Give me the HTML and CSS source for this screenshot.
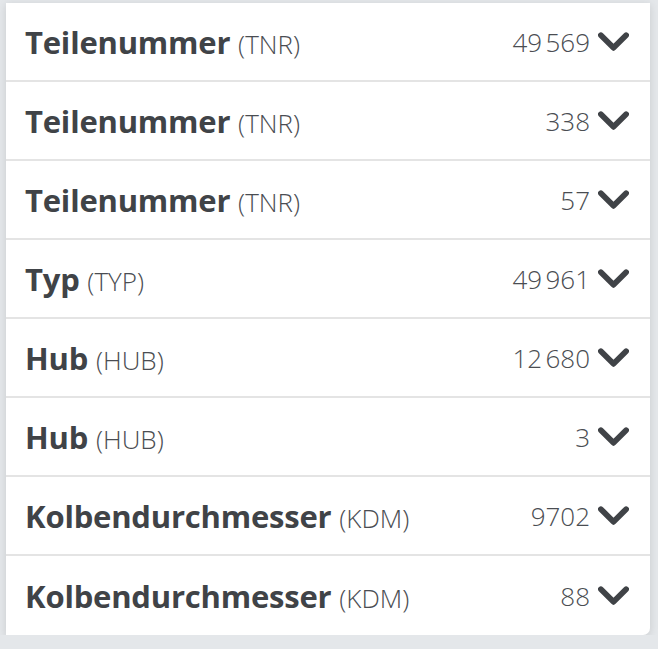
FILE: index.html
```html
<!DOCTYPE html>
<html lang="de">
<head>
    <meta charset="UTF-8">
    <meta name="viewport" content="width=device-width, initial-scale=1.0">
    <title>Filter</title>
    <link rel="stylesheet" href="styles.css">
</head>
<body>
    <div class="facets">
        <div class="facet">
            <span class="facet-name"><b>Teilenummer</b> (TNR)</span>
            <span class="facet-count">49&#8239;569</span>
            <svg class="chevron" viewBox="0 0 32 20"><polyline points="3,3 16,16 29,3"/></svg>
        </div>
        <div class="facet">
            <span class="facet-name"><b>Teilenummer</b> (TNR)</span>
            <span class="facet-count">338</span>
            <svg class="chevron" viewBox="0 0 32 20"><polyline points="3,3 16,16 29,3"/></svg>
        </div>
        <div class="facet">
            <span class="facet-name"><b>Teilenummer</b> (TNR)</span>
            <span class="facet-count">57</span>
            <svg class="chevron" viewBox="0 0 32 20"><polyline points="3,3 16,16 29,3"/></svg>
        </div>
        <div class="facet">
            <span class="facet-name"><b>Typ</b> (TYP)</span>
            <span class="facet-count">49&#8239;961</span>
            <svg class="chevron" viewBox="0 0 32 20"><polyline points="3,3 16,16 29,3"/></svg>
        </div>
        <div class="facet">
            <span class="facet-name"><b>Hub</b> (HUB)</span>
            <span class="facet-count">12&#8239;680</span>
            <svg class="chevron" viewBox="0 0 32 20"><polyline points="3,3 16,16 29,3"/></svg>
        </div>
        <div class="facet">
            <span class="facet-name"><b>Hub</b> (HUB)</span>
            <span class="facet-count">3</span>
            <svg class="chevron" viewBox="0 0 32 20"><polyline points="3,3 16,16 29,3"/></svg>
        </div>
        <div class="facet">
            <span class="facet-name"><b>Kolbendurchmesser</b> (KDM)</span>
            <span class="facet-count">9702</span>
            <svg class="chevron" viewBox="0 0 32 20"><polyline points="3,3 16,16 29,3"/></svg>
        </div>
        <div class="facet">
            <span class="facet-name"><b>Kolbendurchmesser</b> (KDM)</span>
            <span class="facet-count">88</span>
            <svg class="chevron" viewBox="0 0 32 20"><polyline points="3,3 16,16 29,3"/></svg>
        </div>
    </div>
</body>
</html>
```

FILE: styles.css
```css
* {
    margin: 0;
    padding: 0;
    box-sizing: border-box;
}
body {
    font-family: "Open Sans", "Liberation Sans", sans-serif;
    background: #e4e7ea;
    color: #404347;
    padding: 3px 8px 0 6px;
}

/* Список фасетов */
.facets {
    background: #fff;
    border-radius: 0 0 7px 0;
    box-shadow: 0 2px 8px rgba(0, 0, 0, 0.12);
}
.facet {
    display: flex;
    align-items: center;
    height: 79px;
    padding: 0 21px 0 19px;
    border-bottom: 2px solid #e4e4e4;
}
.facet:last-child {
    border-bottom: none;
}
.facet-name {
    flex: 1;
    font-size: 26px;
    font-weight: 300;
    color: #4a4d52;
}
.facet-name b {
    font-size: 31px;
    font-weight: 700;
    color: #404347;
    letter-spacing: -0.2px;
    margin-right: 1px;
}
.facet-count {
    font-size: 26px;
    font-weight: 300;
    color: #4a4d52;
    margin-right: 8px;
}
.chevron {
    width: 31px;
    height: 20px;
    fill: none;
    stroke: #404347;
    stroke-width: 6;
    stroke-linecap: round;
    stroke-linejoin: round;
}
```
